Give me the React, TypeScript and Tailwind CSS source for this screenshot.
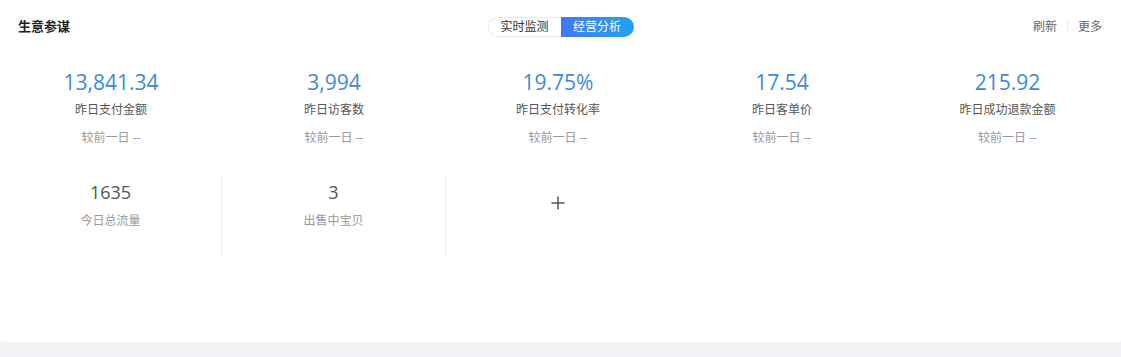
import React from "react";

const font = { fontFamily: '"Open Sans", "Noto Sans CJK SC", sans-serif' };

const metrics = [
  { value: "13,841.34", label: "昨日支付金额" },
  { value: "3,994", label: "昨日访客数" },
  { value: "19.75%", label: "昨日支付转化率" },
  { value: "17.54", label: "昨日客单价" },
  { value: "215.92", label: "昨日成功退款金额" },
];

export default function App() {
  return (
    <div className="min-h-screen bg-[#f0f2f5]" style={font}>
      <div className="h-[342px] bg-white rounded-b-[3px]">
        <div className="grid h-[54px] grid-cols-[1fr_auto_1fr] items-center px-[18px]">
          <div className="text-[13px] font-bold text-[#222]">生意参谋</div>
          <div className="flex h-[20px] text-[12px] leading-[20px]">
            <div className="w-[73px] rounded-l-full border border-r-0 border-[#e8e8e8] text-center leading-[18px] text-[#333]">
              实时监测
            </div>
            <div className="w-[73px] rounded-r-full bg-gradient-to-r from-[#4277f2] to-[#1aa3f2] text-center text-white">
              经营分析
            </div>
          </div>
          <div className="flex items-center justify-end text-[12px] text-[#666] pr-px">
            <span>刷新</span>
            <span className="mx-[10px] h-[14px] w-px bg-[#eeeeee]" />
            <span>更多</span>
          </div>
        </div>
        <div className="grid grid-cols-[222px_224px_224px_224px_227px] pt-[15px]">
          {metrics.map((m) => (
            <div key={m.label} className="flex flex-col items-center">
              <div className="text-[21px] leading-[26px] text-[#3d8ae0]">{m.value}</div>
              <div className="mt-[6px] text-[12px] leading-[18px] text-[#555]">{m.label}</div>
              <div className="mt-[10px] text-[12px] leading-[18px] text-[#999]">较前一日 --</div>
            </div>
          ))}
        </div>
        <div className="mt-[30px] grid grid-cols-[222px_224px_224px]">
          <div className="flex h-[79px] flex-col items-center border-r border-[#ebebeb] pt-[3px]">
            <div className="text-[18px] leading-[24px] text-[#555]">1635</div>
            <div className="mt-[8px] text-[12px] leading-[18px] text-[#999]">今日总流量</div>
          </div>
          <div className="flex h-[79px] flex-col items-center border-r border-[#ebebeb] pt-[3px]">
            <div className="text-[18px] leading-[24px] text-[#555]">3</div>
            <div className="mt-[8px] text-[12px] leading-[18px] text-[#999]">出售中宝贝</div>
          </div>
          <div className="flex h-[79px] items-start justify-center pt-[19px]">
            <svg width="14" height="14" viewBox="0 0 14 14">
              <path d="M7 0.5V13.5M0.5 7H13.5" stroke="#555" strokeWidth="1.5" />
            </svg>
          </div>
        </div>
      </div>
    </div>
  );
}
